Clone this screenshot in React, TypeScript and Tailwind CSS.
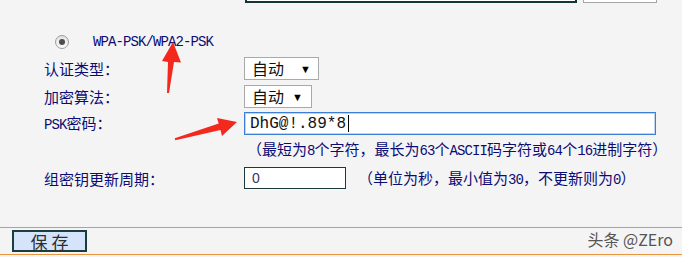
import React from "react";

const CJK = "font-['Noto_Sans_CJK_SC',sans-serif]";
const MONO = "font-['Liberation_Mono',monospace]";

function M({ children }: { children: React.ReactNode }) {
  return <span className={`${MONO} text-[14px] tracking-[-0.9px]`}>{children}</span>;
}

function Label({ children }: { children: React.ReactNode }) {
  return (
    <div className={`${CJK} w-[244px] shrink-0 pl-[44px] text-[15px] leading-none text-[#0c0c74]`}>
      {children}
    </div>
  );
}

function AutoSelect({ width, arrowGap }: { width: string; arrowGap: string }) {
  return (
    <div className={`${width} h-[23px] border border-[#a9a9a9] bg-white flex items-center pl-[7px]`}>
      <span className={`${CJK} text-[16px] leading-none text-[#111]`}>自动</span>
      <span className={`ml-auto ${arrowGap} text-[11px] leading-none text-black`}>▼</span>
    </div>
  );
}

export default function App() {
  return (
    <div className="relative w-[682px] h-[257px] overflow-hidden bg-[#f4f4f4]">
      {/* cut-off controls from the section above */}
      <div className="flex h-[3px] items-end overflow-hidden">
        <div className="ml-[245px] w-[332px] h-[20px] shrink-0 border-2 border-[#173434] bg-white" />
        <div className="ml-[6px] w-[74px] h-[20px] shrink-0 border border-[#a6a6a6] bg-white" />
      </div>

      <div className="h-[27px]" />

      <div className="flex h-[24px] items-center pl-[55px]">
        <span className="flex w-[14px] h-[14px] items-center justify-center rounded-full border border-[#9c9c9c] bg-gradient-to-b from-[#e2e2e2] to-[#fbfbfb]">
          <span className="w-[6px] h-[6px] rounded-full bg-[#4d4d4d]" />
        </span>
        <span className={`${MONO} ml-[24px] text-[14px] tracking-[-0.9px] leading-none text-[#0c0c74]`}>
          WPA-PSK/WPA2-PSK
        </span>
      </div>

      <div className="flex h-[28px] items-center">
        <Label>认证类型：</Label>
        <AutoSelect width="w-[75px]" arrowGap="mr-[7px]" />
      </div>

      <div className="flex h-[28px] items-center">
        <Label>加密算法：</Label>
        <AutoSelect width="w-[68px]" arrowGap="mr-[8px]" />
      </div>

      <div className="flex h-[27px] items-center">
        <Label>
          <M>PSK</M>密码：
        </Label>
        <div className="flex w-[412px] h-[23px] items-center border border-[#3d7ed6] bg-white pl-[5px] shadow-[inset_0_0_0_1px_#bcd4f1]">
          <span className={`${MONO} text-[16px] leading-none text-[#111]`}>DhG@!.89*8</span>
          <span className="ml-[2px] w-px h-[17px] bg-black" />
        </div>
      </div>

      <div className="flex h-[25px] items-center">
        <div className={`${CJK} ml-[247px] text-[15px] leading-none text-[#0c0c74] whitespace-nowrap`}>
          （最短为<M>8</M>个字符，最长为<M>63</M>个<M>ASCII</M>码字符或<M>64</M>个<M>16</M>进制字符）
        </div>
      </div>

      <div className="flex h-[32px] items-center">
        <Label>组密钥更新周期：</Label>
        <div className="flex w-[102px] h-[22px] shrink-0 items-center border border-[#1d3a3a] bg-white pl-[7px]">
          <span className="font-['Liberation_Sans',sans-serif] text-[14px] leading-none text-[#34346a]">0</span>
        </div>
        <div className={`${CJK} ml-[12px] text-[15px] leading-none text-[#0c0c74] whitespace-nowrap`}>
          （单位为秒，最小值为<M>30</M>，不更新则为<M>0</M>）
        </div>
      </div>

      <div className="h-[33px]" />
      <div className="h-px bg-[#e6963f]" />

      <div className="flex h-[26px] items-center">
        <button className="ml-[12px] flex w-[75px] h-[22px] items-center justify-center border-2 border-[#1c3d3d] bg-[#d5e4fb]">
          <span className={`${CJK} text-[17px] leading-none tracking-[4px] pl-[4px] text-[#2e2e2e]`}>保存</span>
        </button>
        <span className={`${CJK} ml-auto mr-[9px] mb-[5px] text-[16px] leading-none text-[#555]`}>头条 @ZEro</span>
      </div>
      <div className="h-px bg-[#e6963f]" />

      {/* annotation arrows */}
      <svg className="pointer-events-none absolute left-0 top-0" width="682" height="257">
        <polygon
          fill="#f4291d"
          points="173,42 181,62.5 174,62 169,93 167,93 168,62 162,61"
        />
        <polygon
          fill="#f4291d"
          points="237,122 222,136 220.5,130 175.3,140.2 174.7,138.2 218.7,123.4 217,118"
        />
      </svg>
    </div>
  );
}
